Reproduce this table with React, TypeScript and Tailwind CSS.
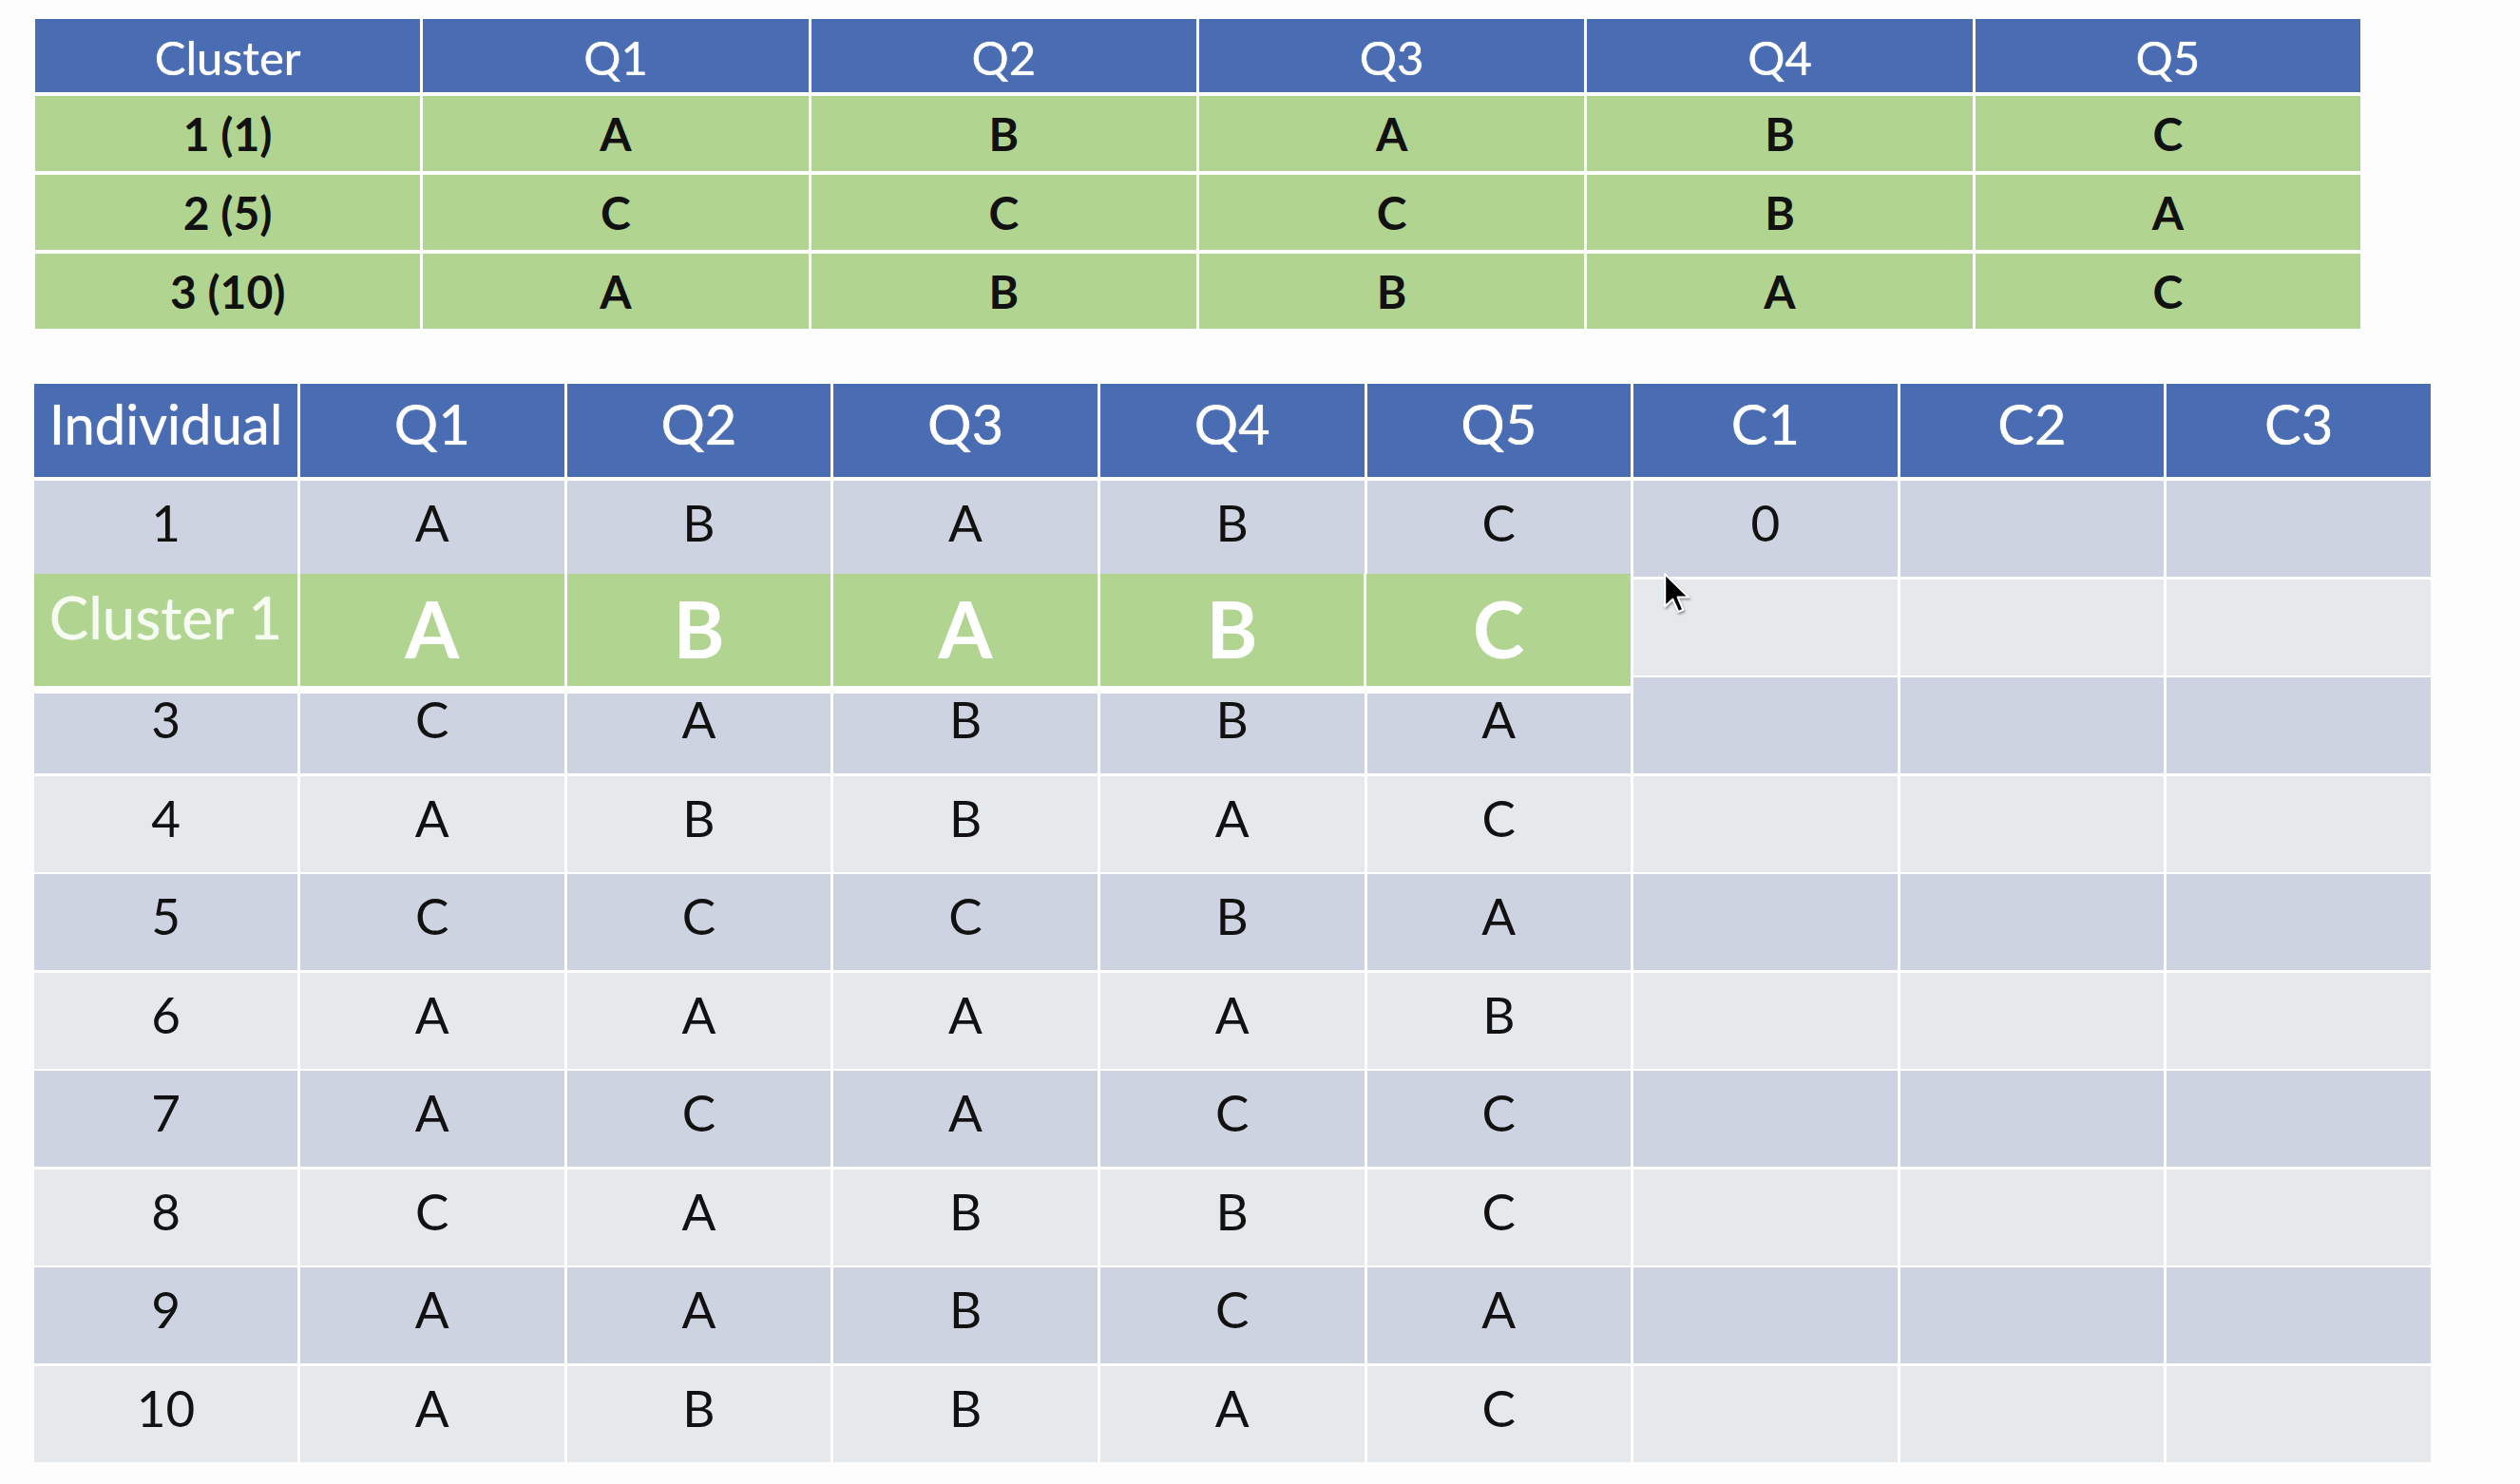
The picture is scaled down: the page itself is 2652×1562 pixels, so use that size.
import React from "react";

const FONT = { fontFamily: 'Lato, "Liberation Sans", sans-serif' };

const topHeaders = ["Cluster", "Q1", "Q2", "Q3", "Q4", "Q5"];
const topRows = [
  ["1 (1)", "A", "B", "A", "B", "C"],
  ["2 (5)", "C", "C", "C", "B", "A"],
  ["3 (10)", "A", "B", "B", "A", "C"],
];

const bottomHeaders = ["Individual", "Q1", "Q2", "Q3", "Q4", "Q5", "C1", "C2", "C3"];
const bottomRows: string[][] = [
  ["1", "A", "B", "A", "B", "C", "0", "", ""],
  ["", "", "", "", "", "", "", "", ""],
  ["3", "C", "A", "B", "B", "A", "", "", ""],
  ["4", "A", "B", "B", "A", "C", "", "", ""],
  ["5", "C", "C", "C", "B", "A", "", "", ""],
  ["6", "A", "A", "A", "A", "B", "", "", ""],
  ["7", "A", "C", "A", "C", "C", "", "", ""],
  ["8", "C", "A", "B", "B", "C", "", "", ""],
  ["9", "A", "A", "B", "C", "A", "", "", ""],
  ["10", "A", "B", "B", "A", "C", "", "", ""],
];

const clusterRow = ["A", "B", "A", "B", "C"];

function Cursor() {
  return (
    <svg width="30" height="46" viewBox="0 0 14 21.5" className="absolute left-[1714px] top-[198px] drop-shadow-[1px_2px_1px_rgba(0,0,0,0.35)]">
      <path d="M1 1 L1 17 L4.8 13.4 L7.6 19.6 L10 18.6 L7.3 12.4 L12.6 12.4 Z" fill="#000" stroke="#fff" strokeWidth="1" strokeLinejoin="round" />
    </svg>
  );
}

export default function App() {
  return (
    <div className="w-[2652px] h-[1562px] bg-[#fcfdfc] pl-[36px] pt-[20px] overflow-hidden" style={FONT}>
      {/* Top cluster table */}
      <div className="ml-[1px] w-[2447px] flex flex-col gap-[4px] bg-white">
        <div className="grid grid-cols-6 gap-x-[3px] h-[77px]">
          {topHeaders.map((h) => (
            <div key={h} className="bg-[#4a6cb3] flex items-center justify-center text-white text-[49px] leading-none pt-[4px] [text-shadow:0_0_1px_#fff]">
              {h}
            </div>
          ))}
        </div>
        {topRows.map((r, i) => (
          <div key={i} className="grid grid-cols-6 gap-x-[3px] h-[79px]">
            {r.map((c, j) => (
              <div key={j} className="bg-[#b1d591] flex items-center justify-center text-[#111] font-bold text-[48px] leading-none">
                {c}
              </div>
            ))}
          </div>
        ))}
      </div>

      {/* Bottom individual table */}
      <div className="relative mt-[58px] w-[2522px] bg-white">
        <div className="grid grid-cols-[277px_repeat(8,minmax(0,1fr))] gap-x-[3px] h-[98px]">
          {bottomHeaders.map((h) => (
            <div key={h} className="bg-[#4a6cb3] flex items-center justify-center text-white text-[58px] leading-none pb-[14px] [text-shadow:0_0_1px_#fff]">
              {h}
            </div>
          ))}
        </div>
        <div className="mt-[4px] flex flex-col gap-y-[2.5px]">
          {bottomRows.map((r, i) => (
            <div key={i} className="grid grid-cols-[277px_repeat(8,minmax(0,1fr))] gap-x-[3px] h-[101px]">
              {r.map((c, j) => (
                <div
                  key={j}
                  className={
                    (i % 2 === 0 ? "bg-[#cdd3e0]" : "bg-[#e6e9ec]") +
                    " flex items-center justify-center text-[#111] text-[53px] leading-none pb-[14px]"
                  }
                >
                  {c}
                </div>
              ))}
            </div>
          ))}
        </div>

        {/* Cluster 1 overlay */}
        <div className="absolute left-0 top-[200px] w-[1680px] bg-white pb-[8px]">
          <div className="grid grid-cols-[277px_repeat(5,minmax(0,1fr))] gap-x-[3px] h-[118px]">
            <div className="bg-[#b1d591] flex items-start justify-center pt-[14px] text-[#f6fcf1] text-[62px] leading-none whitespace-nowrap [text-shadow:0_0_1px_#fff]">
              Cluster 1
            </div>
            {clusterRow.map((c, j) => (
              <div key={j} className="bg-[#b1d591] flex items-center justify-center text-white font-bold text-[82px] leading-none pb-[4px]">
                {c}
              </div>
            ))}
          </div>
        </div>

        <Cursor />
      </div>
    </div>
  );
}
